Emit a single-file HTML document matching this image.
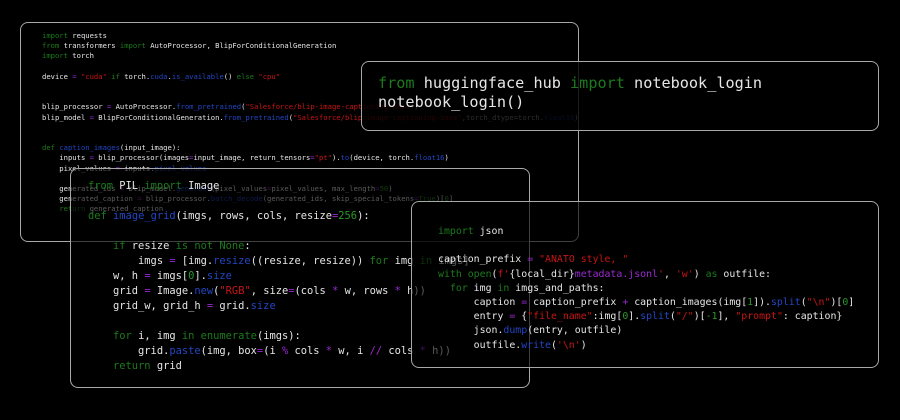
<!DOCTYPE html>
<html><head><meta charset="utf-8"><style>
body{margin:0;width:900px;height:420px;background:#000;overflow:hidden;position:relative;font-family:"Liberation Mono","DejaVu Sans Mono",monospace;color:#e6e6e6}
.box{position:absolute;border:1px solid #a8a8a8;border-radius:8px;box-sizing:border-box}
.c{position:absolute;white-space:pre;margin:0}
.k{color:#1c7a1c}.s{color:#c81414}.f{color:#2346c4}.n{color:#2a9a2a}.p{color:#9a2ad0}.d{color:#555}
</style></head><body>

<div class="box" style="left:20px;top:22px;width:559px;height:220px;background:#000"></div>
<pre class="c" style="left:42px;top:31px;font-size:7.2px;line-height:10.2px"><span class="k">import</span> requests
<span class="k">from</span> transformers <span class="k">import</span> AutoProcessor, BlipForConditionalGeneration
<span class="k">import</span> torch

device <span class="p">=</span> <span class="s">"cuda"</span> <span class="k">if</span> torch.<span class="f">cuda</span>.<span class="f">is_available</span>() <span class="k">else</span> <span class="s">"cpu"</span>


blip_processor <span class="p">=</span> AutoProcessor.<span class="f">from_pretrained</span>(<span class="s">"Salesforce/blip-image-captioning-base"</span>)
blip_model <span class="p">=</span> BlipForConditionalGeneration.<span class="f">from_pretrained</span>(<span class="s">"Salesforce/blip-image-captioning-base"</span>,torch_dtype=torch.<span class="f">float16</span>)


<span class="k">def</span> <span class="f">caption_images</span>(input_image):
    inputs <span class="p">=</span> blip_processor(images<span class="p">=</span>input_image, return_tensors<span class="p">=</span><span class="s">"pt"</span>).<span class="f">to</span>(device, torch.<span class="f">float16</span>)
    pixel_values <span class="p">=</span> inputs.<span class="f">pixel_values</span>

    generated_ids <span class="p">=</span> blip_model.<span class="f">generate</span>(pixel_values<span class="p">=</span>pixel_values, max_length<span class="p">=</span><span class="n">50</span>)
    generated_caption <span class="p">=</span> blip_processor.<span class="f">batch_decode</span>(generated_ids, skip_special_tokens<span class="p">=</span><span class="k">True</span>)[<span class="n">0</span>]
    <span class="k">return</span> generated_caption</pre>

<div class="box" style="left:361px;top:61px;width:518px;height:70px;background:rgba(0,0,0,0.82)"></div>
<pre class="c" style="left:378px;top:74px;font-size:15.2px;line-height:19px"><span class="k">from</span> huggingface_hub <span class="k">import</span> notebook_login
notebook_login()</pre>

<div class="box" style="left:70px;top:168px;width:460px;height:220px;background:rgba(0,0,0,0.62)"></div>
<pre class="c" style="left:88px;top:179px;font-size:10.4px;line-height:15px"><span class="k">from</span> PIL <span class="k">import</span> Image

<span class="k">def</span> <span class="f">image_grid</span>(imgs, rows, cols, resize<span class="p">=</span><span class="n">256</span>):

    <span class="k">if</span> resize <span class="k">is not None</span>:
        imgs <span class="p">=</span> [img.<span class="f">resize</span>((resize, resize)) <span class="k">for</span> img <span class="k">in</span> imgs]
    w, h <span class="p">=</span> imgs[<span class="n">0</span>].<span class="f">size</span>
    grid <span class="p">=</span> Image.<span class="f">new</span>(<span class="s">"RGB"</span>, size<span class="p">=</span>(cols <span class="p">*</span> w, rows <span class="p">*</span> h))
    grid_w, grid_h <span class="p">=</span> grid.<span class="f">size</span>

    <span class="k">for</span> i, img <span class="k">in</span> <span class="k">enumerate</span>(imgs):
        grid.<span class="f">paste</span>(img, box<span class="p">=</span>(i <span class="p">%</span> cols <span class="p">*</span> w, i <span class="p">//</span> cols <span class="p">*</span> h))
    <span class="k">return</span> grid</pre>

<div class="box" style="left:411px;top:201px;width:468px;height:167px;background:rgba(0,0,0,0.62)"></div>
<pre class="c" style="left:438px;top:225px;font-size:9.9px;line-height:14.2px"><span class="k">import</span> json

caption_prefix <span class="p">=</span> <span class="s">"ANATO style, "</span>
<span class="k">with</span> <span class="k">open</span>(<span class="s">f'</span>{local_dir}<span class="p">metadata.jsonl</span><span class="s">'</span>, <span class="s">'w'</span>) <span class="k">as</span> outfile:
  <span class="k">for</span> img <span class="k">in</span> imgs_and_paths:
      caption <span class="p">=</span> caption_prefix <span class="p">+</span> caption_images(img[<span class="n">1</span>]).<span class="f">split</span>(<span class="s">"\n"</span>)[<span class="n">0</span>]
      entry <span class="p">=</span> {<span class="s">"file_name"</span>:img[<span class="n">0</span>].<span class="f">split</span>(<span class="s">"/"</span>)[<span class="n">-1</span>], <span class="s">"prompt"</span>: caption}
      json.<span class="f">dump</span>(entry, outfile)
      outfile.<span class="f">write</span>(<span class="s">'\n'</span>)</pre>

</body></html>
